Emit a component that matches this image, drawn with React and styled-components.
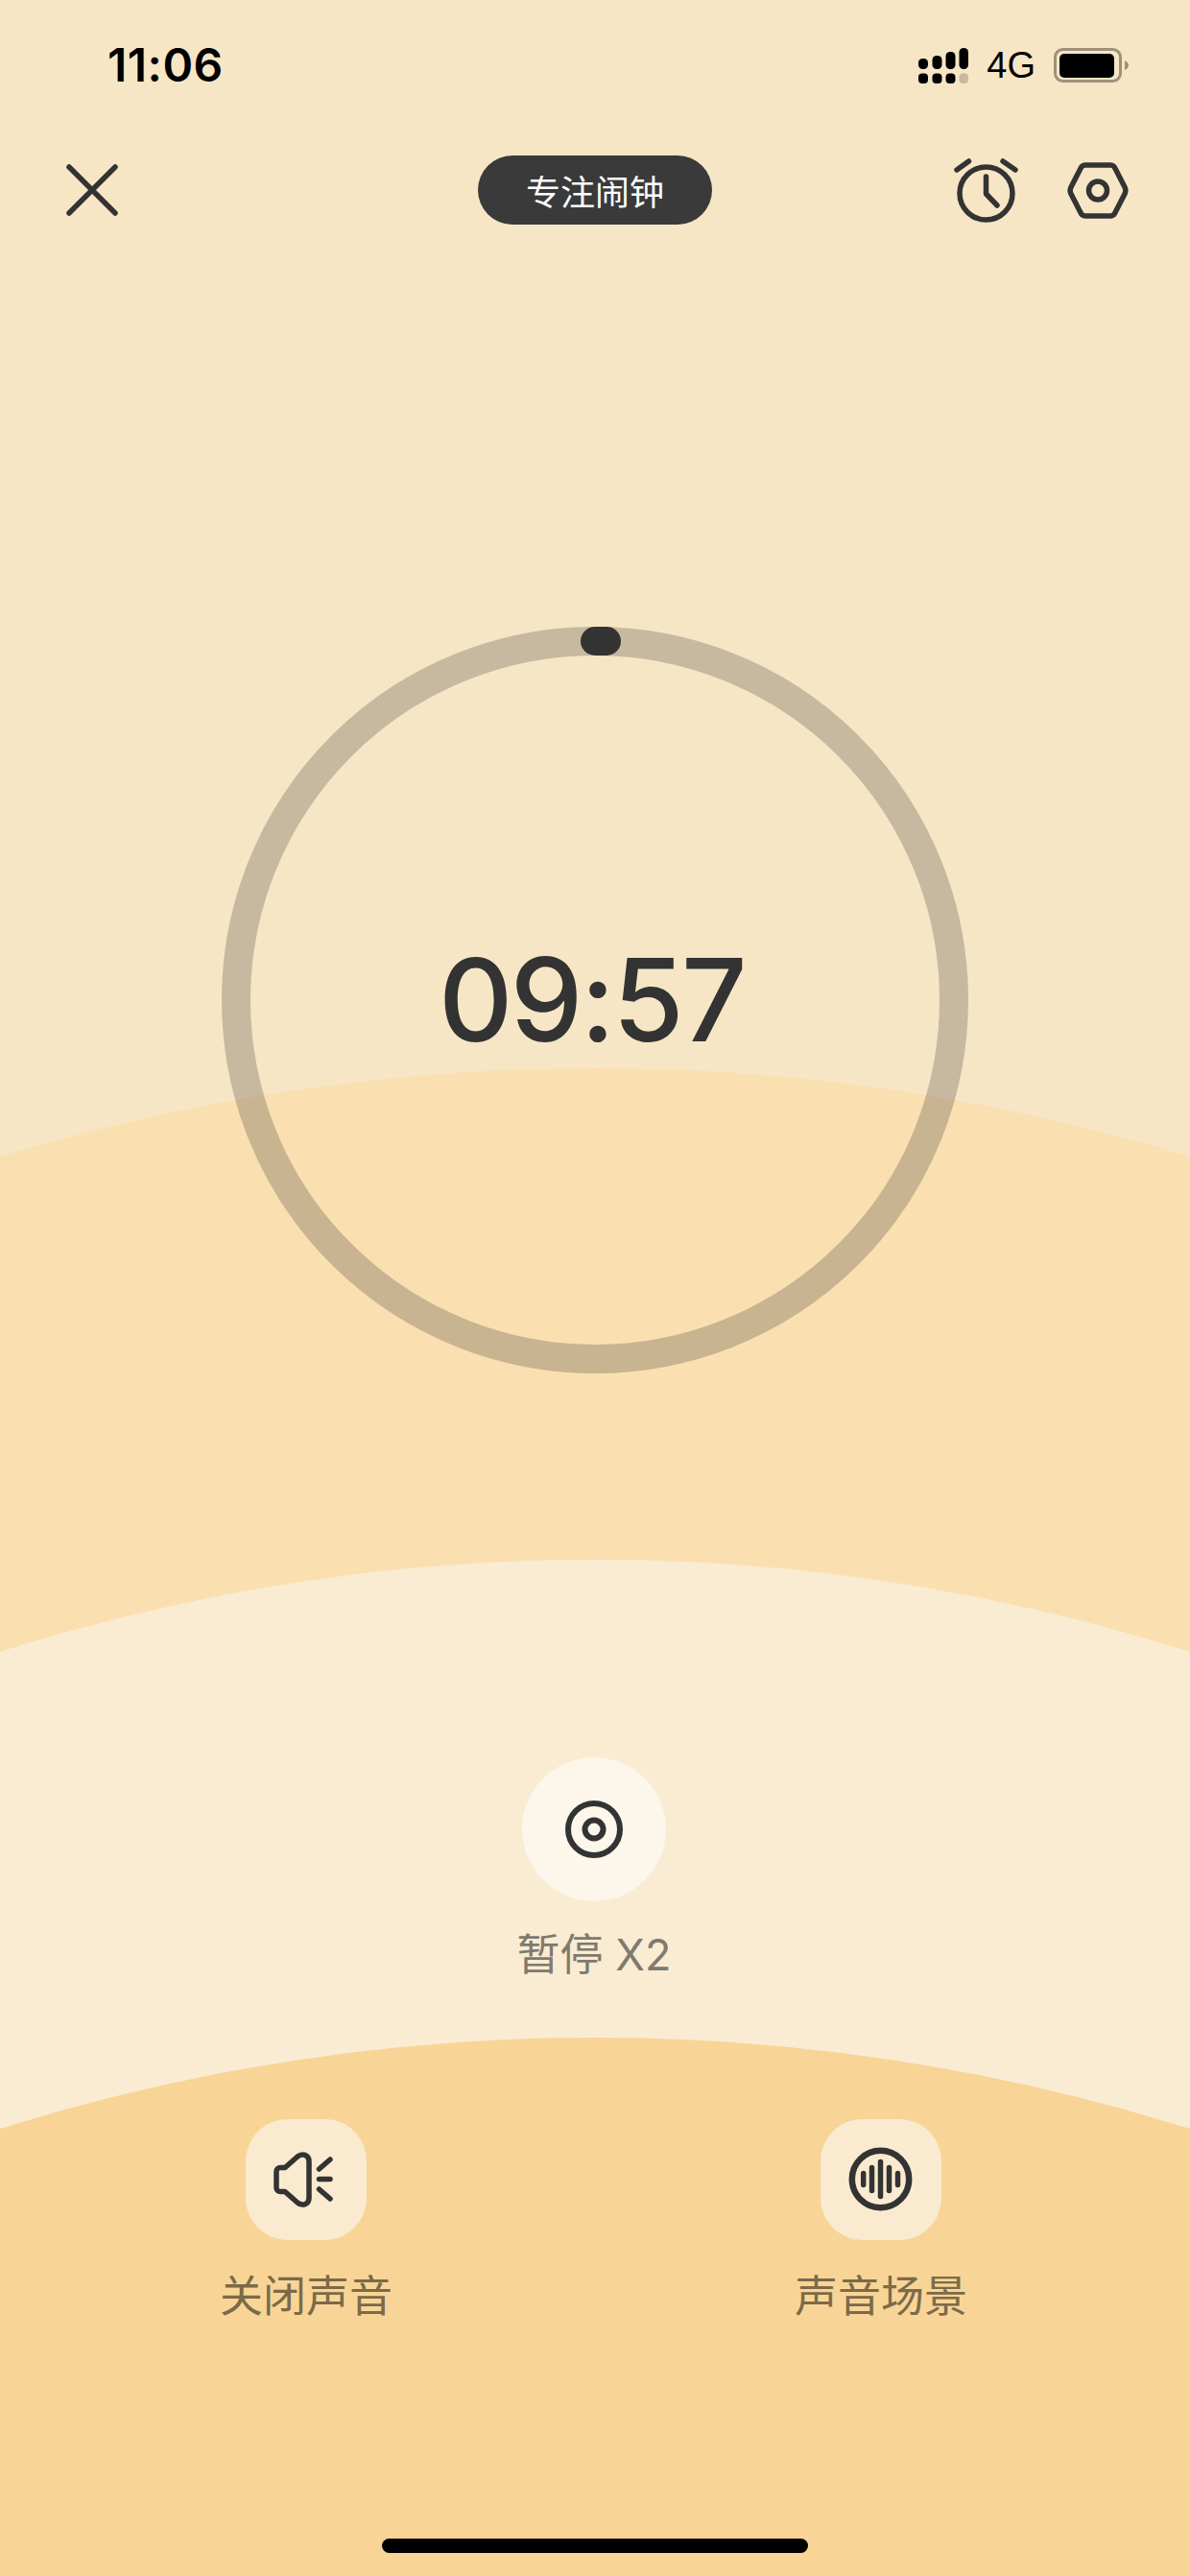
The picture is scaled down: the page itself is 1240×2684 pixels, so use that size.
import React from "react";
import styled, { createGlobalStyle } from "styled-components";

const GlobalStyle = createGlobalStyle`
	html, body {
		margin: 0;
		padding: 0;
	}
	body {
		font-family: "Inter", "Noto Sans CJK SC", sans-serif;
	}
`;

const Page = styled.div`
	width: 1240px;
	height: 2684px;
	overflow: hidden;
	background: #f7e6c5;
	display: flex;
	flex-direction: column;
`;

const StatusBar = styled.div`
	height: 136px;
	flex: none;
	padding: 0 64px 0 112px;
	box-sizing: border-box;
	display: flex;
	align-items: center;
	justify-content: space-between;
	color: #000;
`;

const Clock = styled.span`
	font-size: 48px;
	font-weight: 600;
	line-height: 1;
	letter-spacing: 0.5px;
`;

const StatusIcons = styled.div`
	display: flex;
	align-items: center;
`;

const Network = styled.span`
	font-family: "Liberation Sans", sans-serif;
	font-size: 38px;
	line-height: 1;
	margin: 0 19px 0 19px;
`;

const NavBar = styled.div`
	height: 124px;
	flex: none;
	padding: 0 64px 0 69px;
	box-sizing: border-box;
	display: grid;
	grid-template-columns: 1fr auto 1fr;
	align-items: center;
`;

const NavActions = styled.div`
	display: flex;
	justify-content: flex-end;
	align-items: center;
	gap: 51px;
`;

const Pill = styled.div`
	width: 244px;
	height: 72px;
	margin-left: -5px;
	border-radius: 36px;
	background: #3a3a3a;
	color: #fff;
	font-family: "Noto Sans CJK SC", sans-serif;
	font-size: 36px;
	font-weight: 400;
	display: flex;
	align-items: center;
	justify-content: center;
`;

const Ring = styled.div`
	position: relative;
	z-index: 1;
	flex: none;
	width: 778px;
	height: 778px;
	box-sizing: border-box;
	margin: 393px auto 0;
	border: 30px solid rgba(51, 51, 51, 0.25);
	border-radius: 50%;
	display: flex;
	align-items: center;
	justify-content: center;
`;

const Handle = styled.div`
	position: absolute;
	top: -30px;
	left: 344px;
	width: 42px;
	height: 30px;
	border-radius: 15px;
	background: #333;
`;

const Time = styled.div`
	font-size: 120px;
	font-weight: 500;
	line-height: 1;
	letter-spacing: -2.65px;
	margin-right: 7px;
	color: #333;
`;

const Band = styled.div`
	flex: 1;
	display: flex;
	flex-direction: column;
	background: ${({ $color }) => $color};
	padding-top: ${({ $top }) => $top}px;
	clip-path: circle(${({ $radius }) => $radius}px at 50% ${({ $radius }) => $radius}px);
`;

const SkyBand = styled(Band)`
	margin-top: -318px;
`;

const PauseBlock = styled.div`
	display: flex;
	flex-direction: column;
	align-items: center;
	height: 292px;
	flex: none;
	padding-right: 2px;
`;

const RoundButton = styled.div`
	width: 150px;
	height: 150px;
	border-radius: 50%;
	background: #fdf6ea;
	display: flex;
	align-items: center;
	justify-content: center;
`;

const PauseLabel = styled.div`
	margin-top: 26px;
	font-family: "Inter", "Noto Sans CJK SC", sans-serif;
	font-size: 45px;
	line-height: 60px;
	color: #7f7a6e;
`;

const Actions = styled.div`
	display: flex;
	justify-content: center;
	gap: 419px;
	margin-left: -3px;
`;

const Action = styled.div`
	display: flex;
	flex-direction: column;
	align-items: center;
`;

const SquircleButton = styled.div`
	width: 126px;
	height: 126px;
	border-radius: 44px;
	background: #faebd0;
	display: flex;
	align-items: center;
	justify-content: center;
`;

const ActionLabel = styled.div`
	margin-top: 26px;
	font-family: "Noto Sans CJK SC", sans-serif;
	font-size: 45px;
	line-height: 60px;
	color: #7c6a48;
`;

const HomeBar = styled.div`
	width: 444px;
	height: 15px;
	margin: 225px auto 0;
	border-radius: 8px;
	background: #000;
`;

const stroke = {
	fill: "none",
	stroke: "#333",
	strokeLinecap: "round",
	strokeLinejoin: "round",
};

const SignalIcon = () => (
	<svg width="52" height="37" viewBox="0 0 52 37">
		<rect x="0" y="11" width="10" height="11" rx="4.500" />
		<rect x="14.500" y="8" width="10" height="14" rx="4.500" />
		<rect x="28.500" y="4" width="10" height="18" rx="4.500" />
		<rect x="42.500" y="0" width="9.500" height="22" rx="4.500" />
		<rect x="0" y="26.500" width="10" height="10.500" rx="4" />
		<rect x="14.500" y="26.500" width="10" height="10.500" rx="4" />
		<rect x="28.500" y="26.500" width="10" height="10.500" rx="4" />
		<rect x="42.500" y="26.500" width="9.500" height="10.500" rx="4" fill="#c8b99f" />
	</svg>
);

const BatteryIcon = () => (
	<svg width="78" height="36" viewBox="0 0 78 36">
		<rect x="1.500" y="1.500" width="68" height="33" rx="8" fill="none" stroke="#9e9079" strokeWidth="3" />
		<rect x="6" y="6" width="57" height="25" rx="5" fill="#000" />
		<path d="M74 13c2.500 1 4 3 4 5s-1.500 4-4 5z" fill="#9e9079" />
	</svg>
);

const CloseIcon = () => (
	<svg width="54" height="54" viewBox="0 0 54 54" {...stroke} strokeWidth="5.500">
		<path d="M3 3L51 51M51 3L3 51" />
	</svg>
);

const AlarmIcon = () => (
	<svg width="67" height="67" viewBox="0 0 67 67" {...stroke} strokeWidth="5.500">
		<circle cx="33.500" cy="36.500" r="27.500" />
		<path d="M33.500 19V37L45 49" />
		<path d="M3 12L15.500 3M51 3L64 12" />
	</svg>
);

const SettingsIcon = () => (
	<svg width="64" height="59" viewBox="0 0 64 59" {...stroke} strokeWidth="5.500">
		<path d="M19 3H45C47 3 48.500 4 49.500 5.500L60 26C61 28 61 31 60 33L49.500 53.500C48.500 55 47 56 45 56H19C17 56 15.500 55 14.500 53.500L4 33C3 31 3 28 4 26L14.500 5.500C15.500 4 17 3 19 3Z" />
		<circle cx="32" cy="29.500" r="9.500" />
	</svg>
);

const PauseIcon = () => (
	<svg width="60" height="60" viewBox="0 0 60 60" {...stroke} strokeWidth="6">
		<circle cx="30" cy="30" r="27" />
		<circle cx="30" cy="30" r="9.500" />
	</svg>
);

const SpeakerIcon = () => (
	<svg width="126" height="126" viewBox="0 0 126 126" {...stroke} strokeWidth="5.500">
		<path d="M41 50.500H36a4 4 0 0 0-4 4V71.500a4 4 0 0 0 4 4H41L54 87C59 91 66 89 66 82V44C66 37 59 35 54 39Z" />
		<path d="M76.500 52L88 42M76.500 62.500H88M76.500 73L88 83" />
	</svg>
);

const SoundSceneIcon = () => (
	<svg width="126" height="126" viewBox="0 0 126 126" {...stroke} strokeWidth="5.500">
		<circle cx="62.500" cy="62.500" r="29.700" strokeWidth="6.500" />
		<path d="M44.700 56.500V68.500M53.500 50.500V74.500M62.500 44.500V80.500M71.500 50.500V74.500M80.500 56.500V68.500" />
	</svg>
);

const App = () => (
	<Page>
		<GlobalStyle />
		<StatusBar>
			<Clock>11:06</Clock>
			<StatusIcons>
				<SignalIcon />
				<Network>4G</Network>
				<BatteryIcon />
			</StatusIcons>
		</StatusBar>
		<NavBar>
			<CloseIcon />
			<Pill>专注闹钟</Pill>
			<NavActions>
				<AlarmIcon />
				<SettingsIcon />
			</NavActions>
		</NavBar>
		<Ring>
			<Handle />
			<Time>09:57</Time>
		</Ring>
		<SkyBand $color="#fadfb0" $top={512} $radius={2135}>
			<Band $color="#faebd3" $top={206} $radius={2050}>
				<PauseBlock>
					<RoundButton>
						<PauseIcon />
					</RoundButton>
					<PauseLabel>暂停 X2</PauseLabel>
				</PauseBlock>
				<Band $color="#f8d597" $top={85} $radius={2070}>
					<Actions>
						<Action>
							<SquircleButton>
								<SpeakerIcon />
							</SquircleButton>
							<ActionLabel>关闭声音</ActionLabel>
						</Action>
						<Action>
							<SquircleButton>
								<SoundSceneIcon />
							</SquircleButton>
							<ActionLabel>声音场景</ActionLabel>
						</Action>
					</Actions>
					<HomeBar />
				</Band>
			</Band>
		</SkyBand>
	</Page>
);

export default App;
